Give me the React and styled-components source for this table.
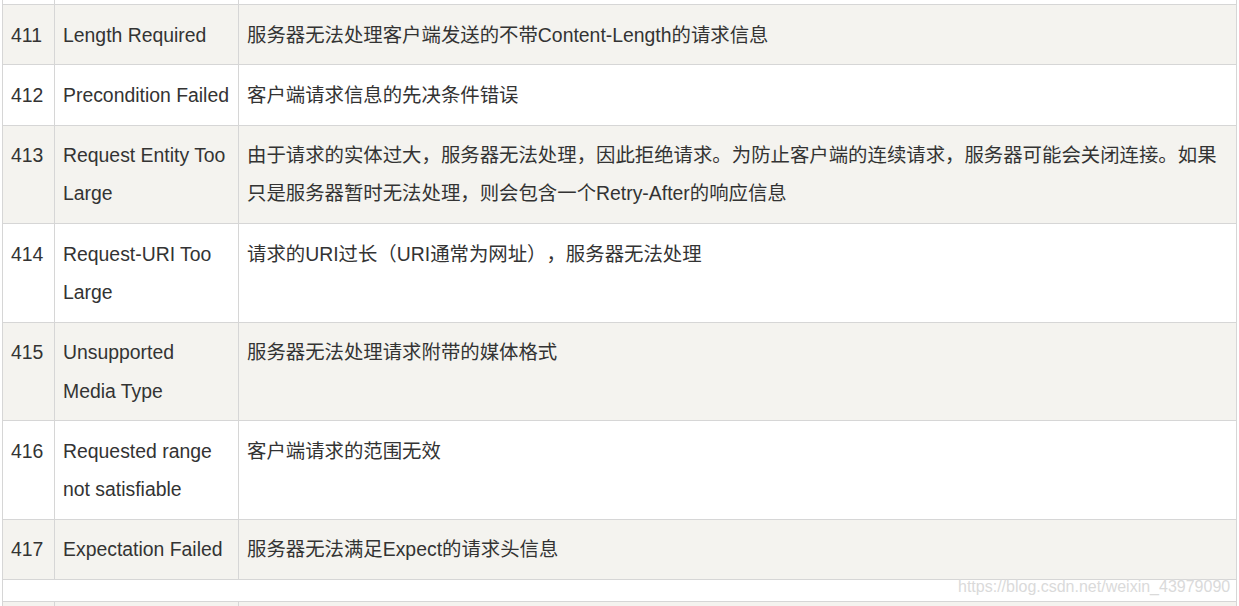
import React from "react";
import styled, { createGlobalStyle } from "styled-components";

const Global = createGlobalStyle`
  html, body { margin: 0; padding: 0; background: #fff; }
  body { font-family: Arial, "Liberation Sans", "Noto Sans CJK SC", sans-serif; overflow: hidden; }
`;

const Page = styled.div`
  position: relative;
  width: 1239px;
  height: 606px;
  overflow: hidden;
  padding-left: 2px;
  box-sizing: border-box;
`;

const Table = styled.table`
  margin-top: -56px;
  border-collapse: collapse;
  width: 1235px;
  table-layout: fixed;
  font-family: Arial, "Liberation Sans", "Noto Sans CJK SC", sans-serif;
  font-size: 19.4px;
  line-height: 38.4px;
  color: #333;
  text-spacing-trim: space-all;
`;

const Row = styled.tr`
  background: ${(p) => (p.$shade ? "#f4f3ef" : "#ffffff")};
`;

const Cell = styled.td`
  border: 1px solid #d6d6d6;
  padding: 10.4px 8px 10.4px 8px;
  vertical-align: top;
  word-break: break-word;
`;

const Watermark = styled.div`
  position: absolute;
  left: 958px;
  top: 578px;
  font-family: Arial, "Liberation Sans", sans-serif;
  font-size: 16px;
  color: #dadada;
  text-shadow: 0 0 1px #fff;
  white-space: nowrap;
  pointer-events: none;
`;

const rows = [
  ["410", "Gone", "客户端请求的资源已经不存在。"],
  ["411", "Length Required", "服务器无法处理客户端发送的不带Content-Length的请求信息"],
  ["412", "Precondition Failed", "客户端请求信息的先决条件错误"],
  [
    "413",
    "Request Entity Too Large",
    "由于请求的实体过大，服务器无法处理，因此拒绝请求。为防止客户端的连续请求，服务器可能会关闭连接。如果只是服务器暂时无法处理，则会包含一个Retry-After的响应信息",
  ],
  ["414", "Request-URI Too Large", "请求的URI过长（URI通常为网址），服务器无法处理"],
  ["415", "Unsupported Media Type", "服务器无法处理请求附带的媒体格式"],
  ["416", "Requested range not satisfiable", "客户端请求的范围无效"],
  ["417", "Expectation Failed", "服务器无法满足Expect的请求头信息"],
];

export default function App() {
  return (
    <>
      <Global />
      <Page lang="zh-CN">
        <Table>
          <colgroup>
            <col style={{ width: 52 }} />
            <col style={{ width: 184 }} />
            <col />
          </colgroup>
          <tbody>
            {rows.map((r, i) => (
              <Row key={r[0]} $shade={i % 2 === 1}>
                <Cell>{r[0]}</Cell>
                <Cell>{r[1]}</Cell>
                <Cell>{r[2]}</Cell>
              </Row>
            ))}
            <Row $shade={false}>
              <Cell colSpan={3}></Cell>
            </Row>
            <Row $shade={true}>
              <Cell>500</Cell>
              <Cell>Internal Server Error</Cell>
              <Cell>服务器内部错误，无法完成请求</Cell>
            </Row>
          </tbody>
        </Table>
        <Watermark>https://blog.csdn.net/weixin_43979090</Watermark>
      </Page>
    </>
  );
}
